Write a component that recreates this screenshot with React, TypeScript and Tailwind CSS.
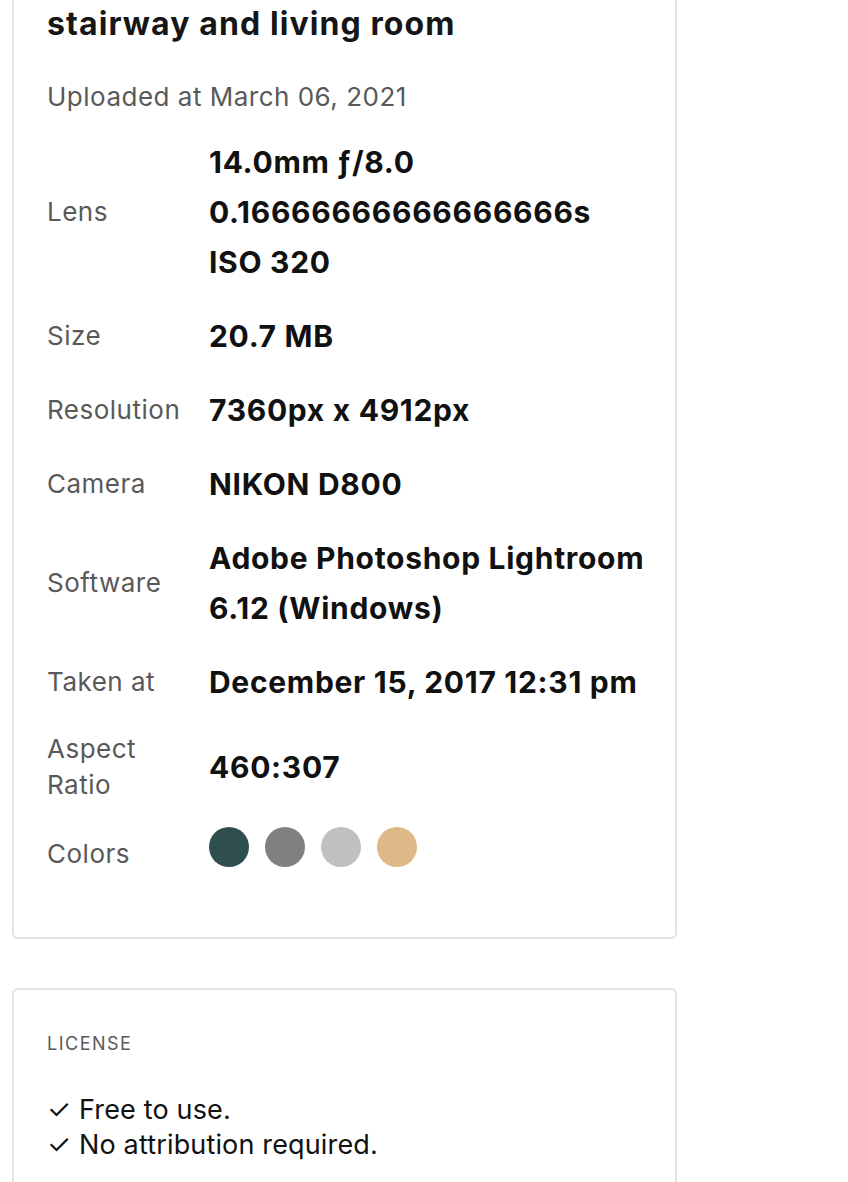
import React from 'react';

const rows: { label: React.ReactNode; value: React.ReactNode }[] = [
  {
    label: 'Lens',
    value: (
      <>
        <div>14.0mm ƒ/8.0</div>
        <div>0.16666666666666666s</div>
        <div>ISO 320</div>
      </>
    ),
  },
  { label: 'Size', value: '20.7 MB' },
  { label: 'Resolution', value: '7360px x 4912px' },
  { label: 'Camera', value: 'NIKON D800' },
  {
    label: 'Software',
    value: (
      <>
        <div>Adobe Photoshop Lightroom</div>
        <div>6.12 (Windows)</div>
      </>
    ),
  },
  { label: 'Taken at', value: 'December 15, 2017 12:31 pm' },
  {
    label: (
      <>
        Aspect
        <br />
        Ratio
      </>
    ),
    value: '460:307',
  },
];

const swatches = ['bg-[#2f4f4f]', 'bg-[#808080]', 'bg-[#c0c0c0]', 'bg-[#deb887]'];

export default function App() {
  return (
    <div className="min-h-[1182px] w-[848px] overflow-hidden bg-white pl-3 font-['Inter',sans-serif]">
      {/* Photo details */}
      <div className="-mt-10 w-[665px] rounded-md border-2 border-[#e2e2e2] px-[33px] pb-[60px] pt-[38px]">
        <h1 className="whitespace-nowrap text-[32px] font-bold leading-[48px] tracking-[1.1px] text-[#161616]">
          stairway and living room
        </h1>
        <p className="mt-[31px] text-[26px] leading-[36px] tracking-[0.5px] text-[#595959]">
          Uploaded at March 06, 2021
        </p>

        <div className="mt-[22px] grid grid-cols-[162px_1fr] items-center gap-y-6">
          {rows.map((row, i) => (
            <React.Fragment key={i}>
              <div className="text-[26px] leading-[36px] tracking-[0.5px] text-[#595959]">{row.label}</div>
              <div className="whitespace-nowrap text-[30px] font-bold leading-[50px] tracking-[0.7px] text-[#111]">
                {row.value}
              </div>
            </React.Fragment>
          ))}
          <div className="mb-[5px] self-end text-[26px] leading-[36px] tracking-[0.5px] text-[#595959]">Colors</div>
          <div className="flex h-[50px] items-start gap-4">
            {swatches.map((c) => (
              <span key={c} className={`h-10 w-10 rounded-full ${c}`} />
            ))}
          </div>
        </div>
      </div>

      {/* License */}
      <div className="mt-[49px] h-[300px] w-[665px] rounded-md border-2 border-[#e2e2e2] px-[33px] pt-[40px]">
        <div className="text-[18px] uppercase leading-[27px] tracking-[1.5px] text-[#595959]">License</div>
        <ul className="mt-[35px] text-[27px] leading-[35px] tracking-[0.15px] text-[#111]">
          <li>
            <span className="mr-[8px] text-[27px]">✓</span>Free to use.
          </li>
          <li>
            <span className="mr-[8px] text-[27px]">✓</span>No attribution required.
          </li>
        </ul>
      </div>
    </div>
  );
}
